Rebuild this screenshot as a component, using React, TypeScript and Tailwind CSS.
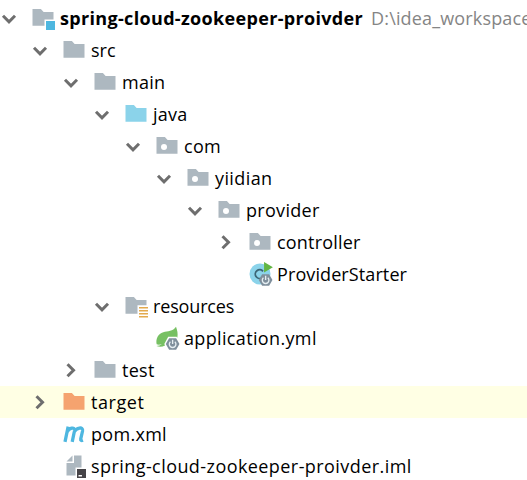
import { clsx } from "clsx"

type IconName =
  | "module"
  | "folder"
  | "source"
  | "package"
  | "resources"
  | "excluded"
  | "starter"
  | "spring"
  | "maven"
  | "iml"

type Row = {
  label: string
  depth: number
  icon: IconName
  state?: "open" | "closed"
  location?: string
  tracking?: string
}

const rows: Row[] = [
  {
    label: "spring-cloud-zookeeper-proivder",
    depth: 0,
    icon: "module",
    state: "open",
    location: "D:\\idea_workspace",
    tracking: "tracking-[0.33px]",
  },
  { label: "src", depth: 1, icon: "folder", state: "open" },
  { label: "main", depth: 2, icon: "folder", state: "open", tracking: "tracking-[0.3px]" },
  { label: "java", depth: 3, icon: "source", state: "open", tracking: "tracking-[0.2px]" },
  { label: "com", depth: 4, icon: "package", state: "open", tracking: "tracking-[0.3px]" },
  { label: "yiidian", depth: 5, icon: "package", state: "open", tracking: "tracking-[0.4px]" },
  { label: "provider", depth: 6, icon: "package", state: "open", tracking: "tracking-[0.3px]" },
  { label: "controller", depth: 7, icon: "package", state: "closed", tracking: "tracking-[0.2px]" },
  { label: "ProviderStarter", depth: 7, icon: "starter", tracking: "tracking-[0.1px]" },
  { label: "resources", depth: 3, icon: "resources", state: "open", tracking: "tracking-[-0.15px]" },
  { label: "application.yml", depth: 4, icon: "spring", tracking: "tracking-[0.35px]" },
  { label: "test", depth: 2, icon: "folder", state: "closed", tracking: "tracking-[0.3px]" },
  { label: "target", depth: 1, icon: "excluded", state: "closed", tracking: "tracking-[0.55px]" },
  { label: "pom.xml", depth: 1, icon: "maven", tracking: "tracking-[0.3px]" },
  {
    label: "spring-cloud-zookeeper-proivder.iml",
    depth: 1,
    icon: "iml",
    tracking: "tracking-[0.43px]",
  },
]

const INDENT = 31

const folderColors: Partial<Record<IconName, string>> = {
  module: "#adb8c0",
  folder: "#adb8c0",
  package: "#adb8c0",
  resources: "#adb8c0",
  source: "#8bd3ea",
  excluded: "#f5a36f",
}

function Chevron({ state }: { state?: "open" | "closed" }) {
  return (
    <svg viewBox="0 0 18 18" className="w-[18px] h-[18px] shrink-0" fill="none" stroke="#6e6e6e" strokeWidth="3">
      {state === "open" && <path d="M3 6.8 9 12.8 15 6.8" />}
      {state === "closed" && <path d="M5.5 3.2 11.500 9.200 5.500 15.200" />}
    </svg>
  )
}

// Spring Boot hexagon with the power sign, shared by two icons
function BootBadge() {
  return (
    <g>
      <path d="M9.4 8.100h4.700L16.300 12l-2.200 3.900H9.400L7.200 12z" fill="#7f8f9c" />
      <path d="M10.300 10.500a2.200 2.200 0 1 0 2.900 0M11.750 9.200v2.800" fill="none" stroke="#e6eef2" strokeWidth=".9" />
    </g>
  )
}

function NodeIcon({ name }: { name: IconName }) {
  const folder = folderColors[name]

  return (
    <svg viewBox="0 0 16 16" className="w-6 h-6 shrink-0 overflow-visible">
      {folder && name !== "module" && name !== "resources" && (
        <path d="M1 2h5.2c.3 0 .5.1.7.3L8.4 4H15v9.1H1z" fill={folder} />
      )}
      {name === "module" && (
        <>
          <path d="M1 2h5.2c.3 0 .5.1.7.3L8.4 4H15v5H9v4.1H1z" fill={folder} />
          <path d="M10 10h6v6h-6z" fill="#4eb7e0" />
        </>
      )}
      {name === "package" && <circle cx="6" cy="8.7" r="2" fill="#fff" />}
      {name === "resources" && (
        <>
          <path d="M1 2h5.2c.3 0 .5.1.7.3L8.4 4H15v3.500H9v5.600H1z" fill={folder} />
          <path d="M10 9.200h6M10 11.200h6M10 13.200h6M10 15.200h6" stroke="#e3aa4d" />
        </>
      )}
      {name === "starter" && (
        <>
          <circle cx="8" cy="8" r="7" fill="#8bd3ea" />
          <path d="M10 6.200A2.900 2.900 0 1 0 9.500 10.400" fill="none" stroke="#3c6575" strokeWidth="1.200" />
          <path d="M10.700 0v7L16.600 3.500z" fill="#62b543" />
          <BootBadge />
        </>
      )}
      {name === "spring" && (
        <>
          <path
            d="M14 .5c.9 2.400 1.400 4.600.9 7.300L14.400 7.200H8.800L6.200 12l.5 1C4.700 14 2.600 14 1 13.300c1.300 0 2.700-.5 3.600-1.300-1.200.6-2.500.7-3.500.2C.4 8.400 2 5.300 5.500 4.200 8.500 3.300 12 3.700 14 .5z"
            fill="#77c063"
          />
          <BootBadge />
        </>
      )}
      {name === "maven" && (
        <path
          d="M2 13.300 4.100 3.100M3.400 6.600C4.700 4 8.800 2.700 8.300 6L6.800 13.300M8.100 6.600C9.500 3.900 14.300 2.700 13.700 6l-1.200 5.300c-.2 1 .4 1.300 1.500.9"
          fill="none"
          stroke="#4eb7e0"
          strokeWidth="2.200"
        />
      )}
      {name === "iml" && (
        <>
          <path d="M8 1h5v8H9v5.300H3V6h5z" fill="#adb8c0" />
          <path d="M7 1v4H3z" fill="#adb8c0" />
          <path d="M10 10h6v6h-6z" fill="#454347" />
          <path d="M11 14.500h2.300" stroke="#fff" />
        </>
      )}
    </svg>
  )
}

function TreeRow({ row }: { row: Row }) {
  return (
    <li
      className={clsx("flex h-8 items-center whitespace-nowrap", row.icon === "excluded" && "bg-[#ffffe4]")}
      style={{ paddingLeft: row.depth * INDENT }}
    >
      <Chevron state={row.state} />
      <div className="ml-[13px] flex items-center gap-[5px]">
        <NodeIcon name={row.icon} />
        <span className={clsx(row.tracking, row.icon === "module" && "font-bold")}>{row.label}</span>
      </div>
      {row.location && <span className="ml-2 tracking-[0.15px] text-[#858585]">{row.location}</span>}
    </li>
  )
}

export default function App() {
  return (
    <div className="h-[480px] w-[527px] overflow-hidden bg-white pt-0.5 font-['Open_Sans','Noto_Sans',sans-serif] text-[18px] leading-8 text-black">
      <ul>
        {rows.map((row, index) => (
          <TreeRow key={index} row={row} />
        ))}
      </ul>
    </div>
  )
}
